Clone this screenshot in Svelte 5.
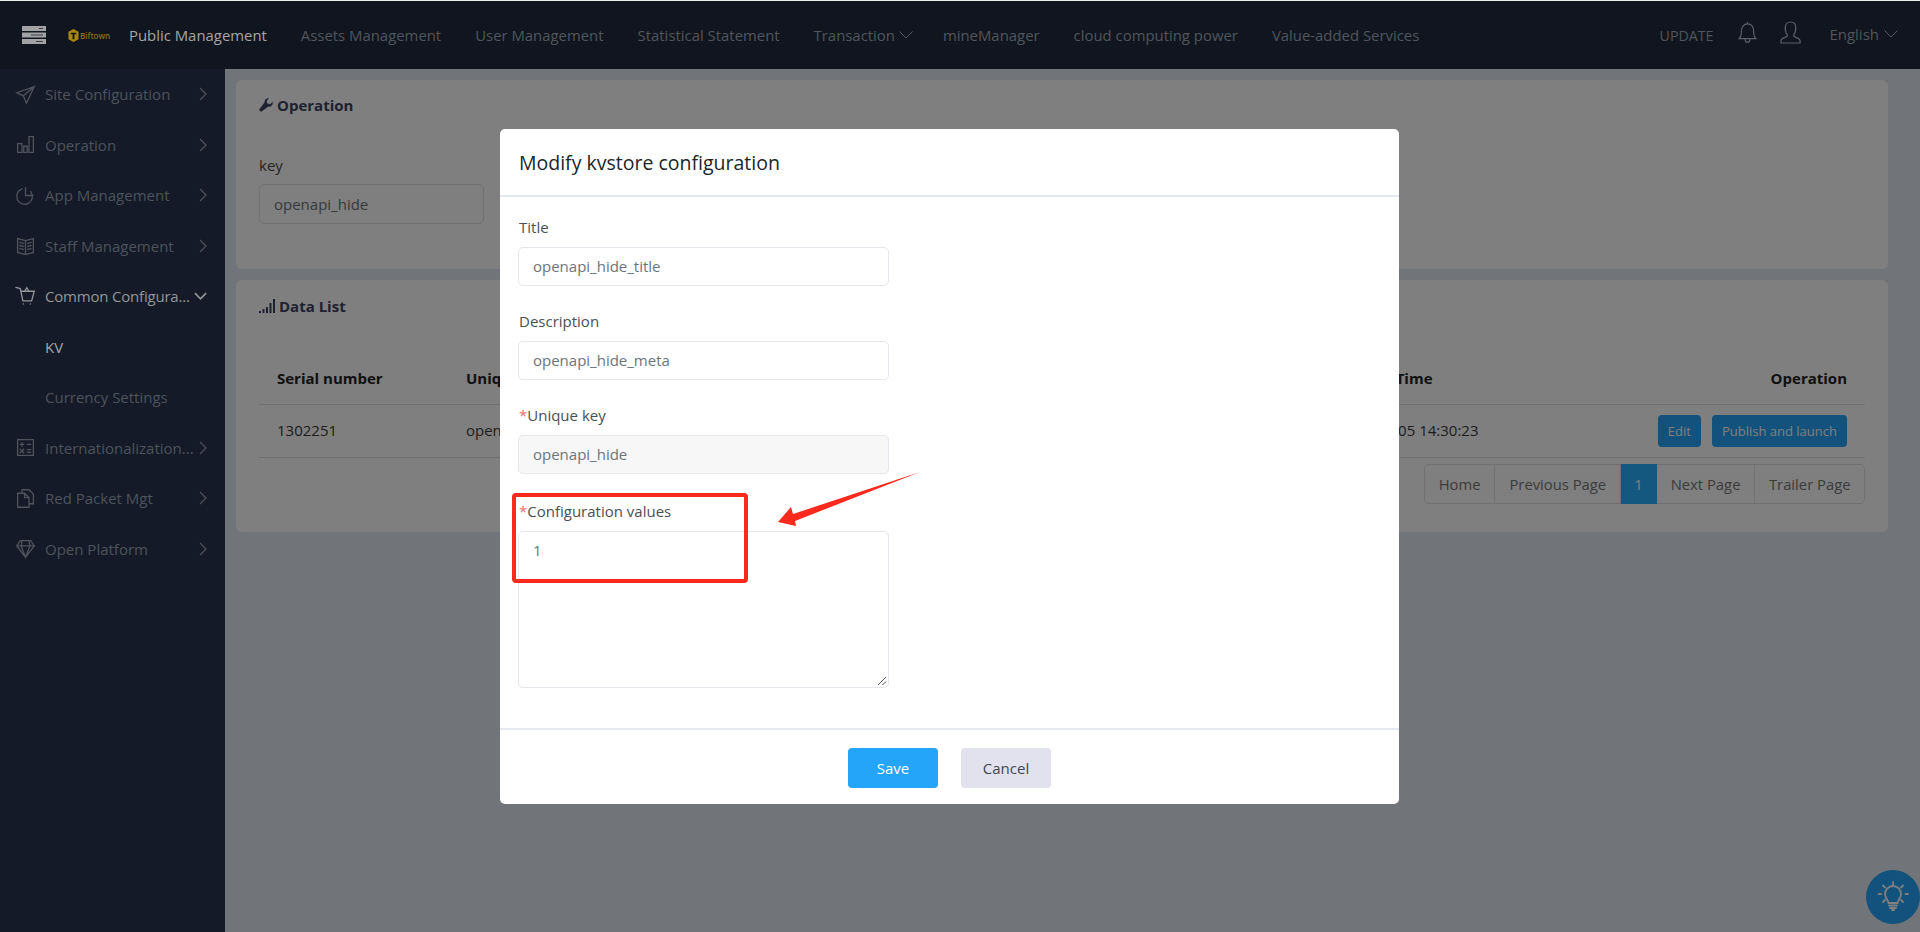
<script>
const topNav = [
  { label: 'Public Management', active: true },
  { label: 'Assets Management' },
  { label: 'User Management' },
  { label: 'Statistical Statement' },
  { label: 'Transaction', caret: true },
  { label: 'mineManager' },
  { label: 'cloud computing power' },
  { label: 'Value-added Services' }
];

const sideNav = [
  { label: 'Site Configuration', icon: 'M22 3 2 10l7.500 3.500L13 22zM22 3 9.500 13.500' },
  { label: 'Operation', icon: 'M3 11h5v10H3zM10 14h4v7h-4zM16 3h5v18h-5z' },
  { label: 'App Management', icon: 'M8 4.500a9 9 0 1 0 10 3M12 3v9h8.500M8 4.500' },
  { label: 'Staff Management', icon: 'M3 4l9 2.500L21 4v16l-9 2.500L3 20zM12 6.500v16M5.500 8.500l4 1M5.500 12l4 1M5.500 15.500l4 1M18.500 8.500l-4 1M18.500 12l-4 1M18.500 15.500l-4 1' },
  { label: 'Common Configura...', icon: 'M1 1.500l5 1.500 3 14h10l3-11H7M11 6l2.500-4L16 6M9.500 20.500h.1M17.500 20.500h.1', open: true },
  { label: 'KV', sub: true, current: true },
  { label: 'Currency Settings', sub: true },
  { label: 'Internationalization...', icon: 'M3 3h18v18H3zM6 8.500h4M8 6.500v4M14 8.500h4M6 14l4 4M10 14l-4 4M14 14.500h4M14 17.500h4' },
  { label: 'Red Packet Mgt', icon: 'M8 6V2h8l5 5v11h-5M3 6h8l5 5v11H3zM11 6v5h5' },
  { label: 'Open Platform', icon: 'M6 3h12l4 6-10 13L2 9zM2 9h20M8 3 7 9l5 13 5-13-1-6' }
];

const pages = ['Home', 'Previous Page', '1', 'Next Page', 'Trailer Page'];

const fields = [
  { label: 'Title', value: 'openapi_hide_title' },
  { label: 'Description', value: 'openapi_hide_meta' },
  { label: 'Unique key', value: 'openapi_hide', required: true, disabled: true }
];
</script>

<div class="page">
  <header class="topbar">
    <svg class="menu-icon" viewBox="0 0 24 18" width="24" height="18">
      <path d="M0 0h24v5H0zM0 6.500h24v5H0zM0 13h24v5H0z" fill="#a2a2a4" />
      <path d="M17 2h4v1h-4zM9 8.500h12v1H9zM14 15h7v1h-7z" fill="#3a3d44" />
    </svg>
    <div class="logo">
      <svg viewBox="0 0 12 14" width="11" height="13">
        <path d="M6 0l5.500 3v8L6 14 .5 11V3z" fill="#a98712" />
        <path d="M3 4h6v1.500H7V11H5V5.500H3z" fill="#10151f" />
      </svg>
      <span>Biftown</span>
    </div>
    <nav class="top-nav">
      {#each topNav as item}
        <span class="top-link" class:active={item.active}>
          {item.label}
          {#if item.caret}
            <svg viewBox="0 0 14 8" width="14" height="8"><path d="M.5 .5 7 7l6.500-6.500" /></svg>
          {/if}
        </span>
      {/each}
    </nav>
    <div class="top-right">
      <span class="update">UPDATE</span>
      <svg class="bell" viewBox="0 0 20 24" width="19" height="23">
        <path d="M1 18.500c2-1.500 2.500-3 2.500-7C3.500 6 6 3 10 3s6.500 3 6.500 8.500c0 4 .5 5.500 2.500 7zM10 3V1M7.500 18.500c0 5 5 5 5 0" />
      </svg>
      <svg class="user" viewBox="0 0 22 24" width="21" height="23">
        <path d="M1 23v-2.500c0-2.500 4.500-3 6.500-4.500v-2C6 12.500 5.500 10.500 5.500 7c0-3.500 2-6 5.500-6s5.500 2.500 5.500 6c0 3.500-.5 5.500-2 7v2c2 1.500 6.500 2 6.500 4.500V23z" />
      </svg>
      <span class="lang">English</span>
      <svg class="lang-caret" viewBox="0 0 14 8" width="14" height="8"><path d="M.5 .5 7 7l6.500-6.500" /></svg>
    </div>
  </header>

  <div class="body">
    <aside class="sidebar">
      {#each sideNav as item}
        <div class="side-item" class:sub={item.sub} class:open={item.open} class:current={item.current}>
          {#if item.icon}
            <svg class="side-icon" viewBox="0 0 24 24" width="21" height="21"><path d={item.icon} /></svg>
          {/if}
          <span class="side-label">{item.label}</span>
          {#if !item.sub}
            <svg class="side-caret" viewBox={item.open ? '0 0 14 8' : '0 0 8 14'} width={item.open ? 13 : 8} height={item.open ? 8 : 14}>
              <path d={item.open ? 'M1 1l6 6 6-6' : 'M1 1l6 6-6 6'} />
            </svg>
          {/if}
        </div>
      {/each}
    </aside>

    <main class="content">
      <section class="card search-card">
        <h3 class="card-title">
          <svg viewBox="0 0 16 16" width="14" height="14">
            <path d="M15.500 4.200 12.800 7 9.500 6.300 8.800 3 11.600.4C9 -.5 6 1.500 6.300 5L.6 12.500c-1 1.500 1.300 3.700 2.800 2.700L10.800 9.800c3.400.6 5.700-2.600 4.700-5.600z" fill="#3d4262" />
          </svg>
          Operation
        </h3>
        <div class="search-label">key</div>
        <div class="search-input">openapi_hide</div>
      </section>

      <section class="card list-card">
        <h3 class="card-title">
          <svg viewBox="0 0 16 14" width="16" height="14">
            <path d="M0 12h2v2H0zM3.500 10h2v4h-2zM7 8h2v6H7zM10.500 4h2v10h-2zM14 0h2v14h-2z" fill="#3d4262" />
          </svg>
          Data List
        </h3>
        <div class="table">
          <div class="row head">
            <span>Serial number</span>
            <span>Unique key</span>
            <span>Update Time</span>
            <span class="ops">Operation</span>
          </div>
          <div class="row body-row">
            <span>1302251</span>
            <span>openapi_hide</span>
            <span>2021-03-05 14:30:23</span>
            <span class="ops">
              <button class="mini">Edit</button>
              <button class="mini">Publish and launch</button>
            </span>
          </div>
        </div>
        <div class="pager">
          {#each pages as p}
            <span class="page-link" class:on={p === '1'}>{p}</span>
          {/each}
        </div>
      </section>
    </main>
  </div>

  <div class="help">
    <svg viewBox="0 0 32 32" width="32" height="32">
      <path d="M11.500 22c0-3-3.500-4.500-3.500-9a8 8 0 0 1 16 0c0 4.500-3.500 6-3.500 9zM12 24.500h8M13 27h6M15 29h2M16 1v2.500M4 13H1.500M31 13h-2.500M6 4.500l2 2M26 4.500l-2 2M6 21l2-2M26 21l-2-2" />
    </svg>
  </div>

  <div class="backdrop"></div>

  <div class="modal">
    <div class="modal-head">Modify kvstore configuration</div>
    <div class="modal-body">
      {#each fields as f}
        <div class="field">
          <div class="field-label">{#if f.required}<i>*</i>{/if}{f.label}</div>
          <div class="field-input" class:disabled={f.disabled}>{f.value}</div>
        </div>
      {/each}
      <div class="field config">
        <div class="field-label"><i>*</i>Configuration values</div>
        <div class="field-area">
          1
          <svg class="grip" viewBox="0 0 10 10" width="10" height="10"><path d="M1 9 9 1M5.500 9 9 5.500" /></svg>
        </div>
      </div>
    </div>
    <div class="modal-foot">
      <button class="btn save">Save</button>
      <button class="btn cancel">Cancel</button>
    </div>
  </div>

  <div class="mark-box"></div>
  <svg class="mark-arrow" viewBox="0 0 150 60" width="150" height="60">
    <path d="M146 1 19 43l-2-7L4 51l18 4-1-5z" fill="#fb2a1c" />
  </svg>
</div>

<style>
  :global(body) {
    margin: 0;
    font-family: "Open Sans", "Noto Sans", sans-serif;
  }

  .page {
    width: 1920px;
    height: 932px;
    display: flex;
    flex-direction: column;
    background: #e3e9f2;
    overflow: hidden;
    position: relative;
    font-size: 15px;
  }

  .topbar {
    position: relative;
    z-index: 3;
    height: 68px;
    flex: none;
    border-top: 1px solid #eceff2;
    background: #10151f;
    display: flex;
    align-items: center;
    padding-left: 22px;
    padding-right: 22px;
    color: #51565e;
  }

  .menu-icon {
    margin-right: 22px;
  }

  .logo {
    width: 61px;
    display: flex;
    align-items: center;
    gap: 1px;
    color: #8c7013;
    font-size: 8px;
    font-weight: 600;
  }

  .top-nav {
    display: flex;
    align-items: center;
    gap: 34px;
    font-size: 14.900px;
  }

  .top-link {
    white-space: nowrap;
    display: flex;
    align-items: center;
    gap: 4px;
  }

  .top-link.active {
    color: #a4a6a9;
  }

  .top-link svg,
  .lang-caret {
    fill: none;
    stroke: #565b63;
    stroke-width: 1;
  }

  .top-link svg {
    margin-right: -4px;
  }

  .top-right {
    margin-left: auto;
    display: flex;
    align-items: center;
  }

  .update {
    margin-right: 25px;
    margin-top: 1px;
    font-size: 14.200px;
  }

  .bell,
  .user {
    fill: none;
    stroke: #5b6068;
    stroke-width: 1.300;
    margin-top: -5px;
  }

  .bell {
    margin-right: 23px;
  }

  .user {
    margin-right: 28px;
  }

  .lang {
    margin-top: -2px;
    margin-right: 5px;
  }

  .lang-caret {
    margin-top: -3px;
  }

  .body {
    flex: 1;
    display: flex;
    min-height: 0;
  }

  .sidebar {
    position: relative;
    z-index: 3;
    width: 225px;
    flex: none;
    background: #141a27;
    padding-top: 0;
    color: #4e535c;
  }

  .side-item {
    height: 50.500px;
    display: flex;
    align-items: center;
    padding-left: 15px;
    padding-right: 18px;
    white-space: nowrap;
  }

  .side-item.sub {
    padding-left: 45px;
  }

  .side-item.open {
    color: #93969b;
  }

  .side-item.current {
    color: #a4a6a9;
  }

  .side-icon {
    fill: none;
    stroke: currentColor;
    stroke-width: 1.500;
    stroke-linecap: round;
    flex: none;
    margin-right: 9px;
  }

  .side-caret {
    margin-left: auto;
    fill: none;
    stroke: currentColor;
    stroke-width: 1.200;
  }

  .side-item.open .side-label {
    letter-spacing: -0.2px;
  }

  .side-item.open .side-caret {
    stroke-width: 1.800;
  }

  .content {
    flex: 1;
    padding: 11px 32px 0 11px;
    min-width: 0;
  }

  .card {
    background: #fff;
    border-radius: 6px;
    padding: 0 23px;
    box-sizing: border-box;
  }

  .search-card {
    height: 189px;
    padding-top: 14px;
    margin-bottom: 11px;
  }

  .list-card {
    height: 252px;
    padding-top: 15px;
  }

  .card-title {
    margin: 0;
    font-size: 15px;
    line-height: 22px;
    font-weight: 700;
    color: #3d4262;
    display: flex;
    align-items: center;
    gap: 4px;
  }

  .search-label {
    margin-top: 38px;
    line-height: 22px;
    color: #4a4a4a;
  }

  .search-input {
    margin-top: 8px;
    width: 225px;
    height: 40px;
    box-sizing: border-box;
    border: 1px solid #dfe3e8;
    border-radius: 5px;
    padding-left: 14px;
    line-height: 38px;
    color: #6c757d;
  }

  .table {
    margin-top: 40px;
    color: #3a3a3a;
  }

  .row {
    display: grid;
    grid-template-columns: 189px 871px 1fr 240px;
    align-items: center;
    height: 52px;
    padding-left: 18px;
    padding-right: 18px;
    border-bottom: 1px solid #dee2e6;
  }

  .row.head {
    font-weight: 700;
    color: #222;
    height: 48px;
    padding-bottom: 6px;
    box-sizing: border-box;
  }

  .body-row > span:not(.ops) {
    margin-bottom: 3px;
  }

  .ops {
    display: flex;
    justify-content: flex-end;
    gap: 11px;
  }

  .mini {
    height: 32px;
    border: 0;
    border-radius: 4px;
    padding: 0 10px;
    background: #24a4f8;
    color: #fff;
    font: inherit;
    font-size: 13px;
  }

  .pager {
    margin-top: 6px;
    display: flex;
    justify-content: flex-end;
    font-size: 14.800px;
  }

  .page-link {
    height: 38px;
    line-height: 38px;
    padding: 0 14px;
    border: 1px solid #dee2e6;
    border-left-width: 0;
    color: #777;
    white-space: nowrap;
  }

  .page-link:first-child {
    border-left-width: 1px;
    border-radius: 5px 0 0 5px;
  }

  .page-link:last-child {
    padding: 0 13.500px;
    border-radius: 0 5px 5px 0;
  }

  .page-link.on {
    padding: 0 13px;
    background: #2ab0ff;
    color: #fff;
    border-color: #2ab0ff;
  }

  .help {
    position: absolute;
    left: 1866px;
    top: 870px;
    width: 54px;
    height: 54px;
    border-radius: 50%;
    background: #24a4f8;
    display: flex;
    align-items: center;
    justify-content: center;
  }

  .help svg {
    fill: none;
    stroke: #fff;
    stroke-width: 1.800;
    stroke-linecap: round;
  }

  .backdrop {
    position: absolute;
    inset: 0;
    z-index: 2;
    background: rgba(0, 0, 0, 0.5);
  }

  .modal {
    position: absolute;
    z-index: 4;
    left: 500px;
    top: 129px;
    width: 899px;
    height: 675px;
    background: #fff;
    border-radius: 5px;
    display: flex;
    flex-direction: column;
  }

  .modal-head {
    height: 66px;
    flex: none;
    border-bottom: 2px solid #e5e9ef;
    padding-left: 19px;
    line-height: 68px;
    font-size: 19.500px;
    font-weight: 500;
    color: #212529;
  }

  .modal-body {
    flex: 1;
    padding: 16px 18px 0;
    color: #495057;
  }

  .field {
    margin-bottom: 21px;
  }

  .field.config {
    margin-top: 23px;
  }

  .field-label {
    line-height: 28px;
    margin-bottom: 6px;
    padding-left: 1px;
  }

  .field-label i {
    color: #e87070;
    font-style: normal;
  }

  .field-input,
  .field-area {
    width: 371px;
    box-sizing: border-box;
    border: 1px solid #e4e7eb;
    border-radius: 5px;
    padding-left: 14px;
    color: #6c757d;
  }

  .field-input {
    height: 39px;
    line-height: 37px;
  }

  .field-input.disabled {
    background: #f7f7f7;
  }

  .field-area {
    height: 157px;
    padding-top: 6px;
    line-height: 24px;
    position: relative;
  }

  .grip {
    position: absolute;
    right: 1px;
    bottom: 1px;
    fill: none;
    stroke: #555;
    stroke-width: 1;
  }

  .modal-foot {
    height: 76px;
    flex: none;
    border-top: 2px solid #e5e9ef;
    box-sizing: border-box;
    display: flex;
    justify-content: center;
    gap: 23px;
    padding-top: 18px;
  }

  .btn {
    width: 90px;
    height: 40px;
    border: 0;
    border-radius: 4px;
    font: inherit;
  }

  .save {
    background: #25a5f9;
    color: #fff;
  }

  .cancel {
    background: #e2e2ef;
    color: #44474f;
  }

  .mark-box {
    position: absolute;
    z-index: 5;
    left: 512px;
    top: 493px;
    width: 236px;
    height: 90px;
    box-sizing: border-box;
    border: 4px solid #fb2a1c;
    border-radius: 4px;
  }

  .mark-arrow {
    position: absolute;
    z-index: 5;
    left: 774px;
    top: 471px;
  }
</style>
